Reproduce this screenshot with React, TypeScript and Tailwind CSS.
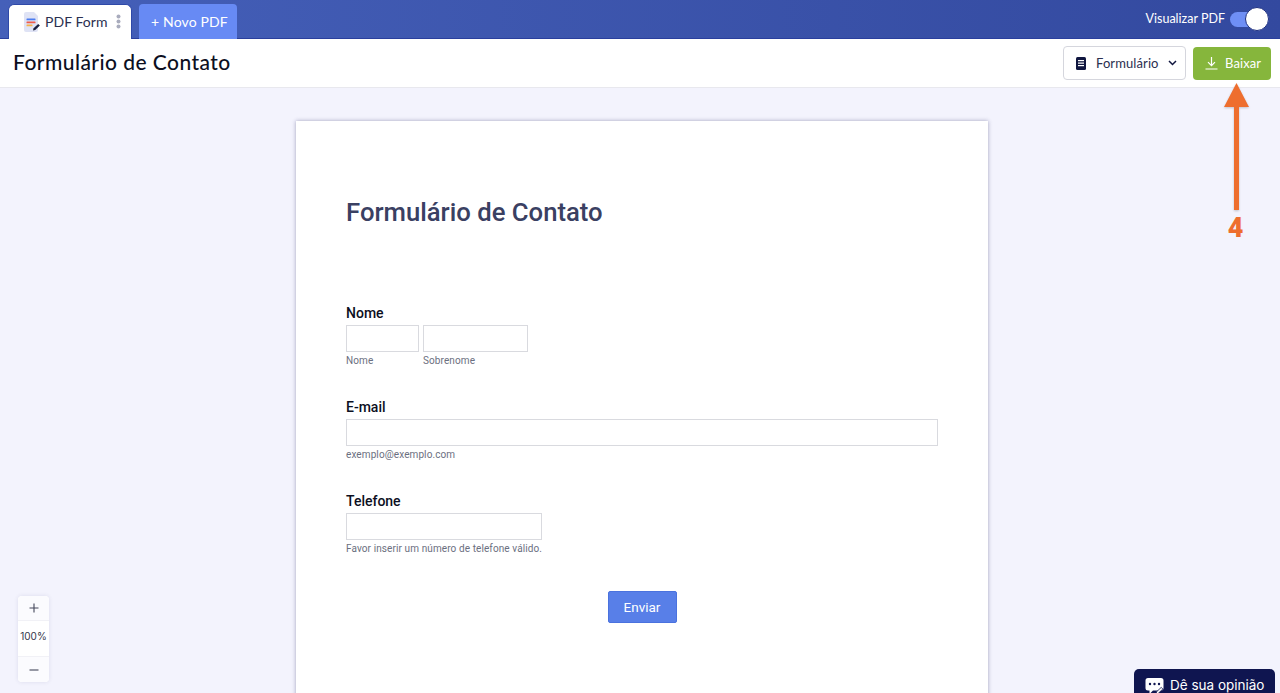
import React from "react";

const ui = { fontFamily: "Lato, 'Open Sans', sans-serif" };
const form = { fontFamily: "Roboto, sans-serif" };

function DocIcon() {
  return (
    <svg width="16" height="20" viewBox="0 0 16 20" className="shrink-0">
      <path d="M2 0h8l4 4v14a2 2 0 0 1-2 2H2a2 2 0 0 1-2-2V2a2 2 0 0 1 2-2z" fill="#dfe3f5" />
      <rect x="2.5" y="6.5" width="9" height="1.8" rx=".5" fill="#4d7df0" />
      <rect x="2.5" y="9.5" width="9" height="1.8" rx=".5" fill="#ef5b4c" />
      <rect x="2.5" y="12.5" width="6" height="1.8" rx=".5" fill="#f6b24a" />
      <path d="M9 18.5l.6-2.2 4.6-4.4 1.7 1.6-4.7 4.4z" fill="#1a1f3d" />
    </svg>
  );
}

function Field({ label, children, hint }: { label: string; children: React.ReactNode; hint?: string }) {
  return (
    <div className="flex flex-col">
      <div className="text-[14px] leading-[16px] font-medium text-[#0c0f22] mb-[4px]">{label}</div>
      {children}
      {hint && <div className="text-[10px] leading-[12px] mt-[3px] text-[#6b6f80] tracking-[0.1px]">{hint}</div>}
    </div>
  );
}

const inputCls = "h-[27px] border border-[#d9dadf] bg-white block";

export default function App() {
  return (
    <div className="relative h-[693px] w-[1280px] overflow-hidden bg-[#f3f3fd] flex flex-col" style={ui}>
      {/* Top bar */}
      <div className="h-[39px] shrink-0 flex items-end justify-between bg-gradient-to-r from-[#4560b9] to-[#33499f] pl-[8px] pr-[11px] border-b border-[#2a3f9d]">
        <div className="flex items-end gap-[7px] h-full">
          <div className="w-[124px] h-[35px] bg-white rounded-t-[6px] border-t border-x border-[#2f49a8] -mb-px flex items-center pl-[15px] pb-[1px]">
            <DocIcon />
            <span className="ml-[5px] text-[14px] text-[#2b2f4f] tracking-[0.05px]">PDF Form</span>
            <svg width="5" height="15" viewBox="0 0 5 15" className="ml-[8px]">
              <circle cx="2.5" cy="2.5" r="2" fill="#a9acbd" />
              <circle cx="2.5" cy="7.5" r="2" fill="#a9acbd" />
              <circle cx="2.5" cy="12.5" r="2" fill="#a9acbd" />
            </svg>
          </div>
          <div className="w-[98px] h-[35px] bg-[#678af4] rounded-t-[4px] flex items-center justify-start pl-[12px] text-[14px] text-white tracking-[0.15px] -mb-px">
            + Novo PDF
          </div>
        </div>
        <div className="flex items-center h-full gap-[5px] pt-[1px]">
          <span className="text-[12.5px] text-white tracking-[0px]">Visualizar PDF</span>
          <div className="relative w-[39px] h-[15px] rounded-full bg-[#6f8ff5]">
            <div className="absolute right-0 top-[-5px] w-[24px] h-[24px] rounded-full bg-white border border-[#1e2f80]" />
          </div>
        </div>
      </div>

      {/* Sub bar */}
      <div className="h-[49px] shrink-0 bg-white border-b border-[#e8e8ee] flex items-center justify-between pl-[13px] pr-[9px]">
        <div className="text-[21px] text-[#0c0f1f] tracking-[0.45px] font-medium -mt-[2px]">Formulário de Contato</div>
        <div className="flex items-center gap-[7px]">
          <div className="w-[123px] h-[34px] rounded-[4px] border border-[#d5d6dd] bg-white flex items-center pl-[12px] text-[13px] text-[#2b2f4f] tracking-[0.1px]">
            <svg width="10" height="13" viewBox="0 0 10 13" className="shrink-0">
              <rect width="10" height="13" rx="1.5" fill="#10163f" />
              <rect x="2" y="3" width="6" height="1.2" fill="#fff" />
              <rect x="2" y="5.5" width="6" height="1.2" fill="#fff" />
              <rect x="2" y="8" width="6" height="1.2" fill="#fff" />
            </svg>
            <span className="ml-[10px] translate-y-[1px]">Formulário</span>
            <svg width="9" height="6" viewBox="0 0 9 6" className="ml-[9px]">
              <path d="M1 1l3.5 3.5L8 1" fill="none" stroke="#10163f" strokeWidth="1.5" />
            </svg>
          </div>
          <div className="w-[78px] h-[33px] rounded-[4px] bg-[#86b63c] flex items-center pl-[12px] text-[13px] text-white tracking-[0.1px]">
            <svg width="13" height="14" viewBox="0 0 13 14" className="shrink-0">
              <path d="M6.5 1v8.5M3 6.2l3.5 3.5L10 6.2M.5 13h12" fill="none" stroke="#fff" strokeWidth="1.2" />
            </svg>
            <span className="ml-[7px] translate-y-[1px]">Baixar</span>
          </div>
        </div>
      </div>

      {/* Canvas */}
      <div className="flex-1 flex justify-center pt-[33px] pl-[4px] overflow-hidden">
        <div className="w-[692px] h-[700px] bg-white shadow-[0_0_4px_rgba(60,60,110,0.45)] px-[50px] pt-[76px]" style={form}>
          <h1 className="text-[25.7px] leading-[32px] font-medium text-[#3a4062] -translate-y-[1px]">Formulário de Contato</h1>
          <div className="mt-[76px]">
            <Field label="Nome">
              <div className="flex gap-[4px]">
                <div className="w-[73px]">
                  <div className={inputCls} />
                  <div className="text-[10px] leading-[12px] mt-[3px] text-[#6b6f80] tracking-[0.1px]">Nome</div>
                </div>
                <div className="w-[105px]">
                  <div className={inputCls} />
                  <div className="text-[10px] leading-[12px] mt-[3px] text-[#6b6f80] tracking-[0.1px]">Sobrenome</div>
                </div>
              </div>
            </Field>
          </div>
          <div className="mt-[32px]">
            <Field label="E-mail" hint="exemplo@exemplo.com">
              <div className={`${inputCls} w-[592px]`} />
            </Field>
          </div>
          <div className="mt-[32px]">
            <Field label="Telefone" hint="Favor inserir um número de telefone válido.">
              <div className={`${inputCls} w-[196px]`} />
            </Field>
          </div>
          <div className="flex justify-center mt-[36px]">
            <div className="w-[69px] h-[32px] rounded-[2px] bg-[#587fe8] border border-[#4a72de] text-white text-[13.5px] flex items-center justify-center">
              Enviar
            </div>
          </div>
        </div>
      </div>

      {/* Annotation arrow */}
      <div className="absolute left-[1224px] top-[83px] flex flex-col items-center w-[25px]">
        <svg width="25" height="127" viewBox="0 0 25 127" className="drop-shadow-[0_1px_1px_rgba(0,0,0,0.2)]">
          <path d="M12.5 0L25 24H15V127H10V24H0z" fill="#ee6e2e" />
        </svg>
        <div className="text-[27px] leading-[28px] font-black text-[#ee6e2e] mt-[4px] -translate-x-[1px]" style={{ fontFamily: "Roboto, sans-serif" }}>4</div>
      </div>

      {/* Zoom control */}
      <div className="absolute left-[18px] top-[596px] w-[31px] h-[86px] rounded-[4px] bg-white shadow-[0_0_4px_rgba(60,60,110,0.12)] flex flex-col items-center text-[#33364a]">
        <div className="h-[25px] w-full flex items-center justify-center border-b border-[#f1f1f6] bg-[#fbfbfe] rounded-t-[4px]">
          <svg width="10" height="10" viewBox="0 0 10 10"><path d="M5 .5v9M.5 5h9" stroke="#44475a" strokeWidth="1.1" /></svg>
        </div>
        <div className="h-[35px] flex items-center justify-center pb-[4px] text-[10px] text-[#33364a]" style={{ fontFamily: "Inter, sans-serif" }}>100%</div>
        <div className="h-[26px] w-full flex items-center justify-center border-t border-[#f1f1f6] bg-[#fbfbfe] rounded-b-[4px]">
          <svg width="10" height="2" viewBox="0 0 10 2"><path d="M.5 1h9" stroke="#44475a" strokeWidth="1.1" /></svg>
        </div>
      </div>

      {/* Feedback */}
      <div className="absolute left-[1134px] top-[669px] w-[141px] h-[30px] rounded-t-[5px] bg-[#0f1550] flex items-start pl-[11px] pt-[7px] text-white" style={{ fontFamily: "Inter, sans-serif" }}>
        <svg width="20" height="18" viewBox="0 0 20 18" className="shrink-0 mt-[2px]">
          <path d="M3 0h13a2.5 2.5 0 0 1 2.5 2.5V10a2.5 2.5 0 0 1-2.5 2.5H8L4.5 16v-3.5H3A2.5 2.5 0 0 1 .5 10V2.5A2.5 2.5 0 0 1 3 0z" fill="#fff" />
          <circle cx="5" cy="6" r="1.2" fill="#0f1550" /><circle cx="9.5" cy="6" r="1.2" fill="#0f1550" /><circle cx="14" cy="6" r="1.2" fill="#0f1550" />
          <path d="M11 16l.6-2.2 4.6-4.4 1.7 1.6-4.7 4.4z" fill="#fff" stroke="#0f1550" strokeWidth=".8" />
        </svg>
        <span className="ml-[5px] text-[13.5px] leading-[18px]">Dê sua opinião</span>
      </div>
    </div>
  );
}
